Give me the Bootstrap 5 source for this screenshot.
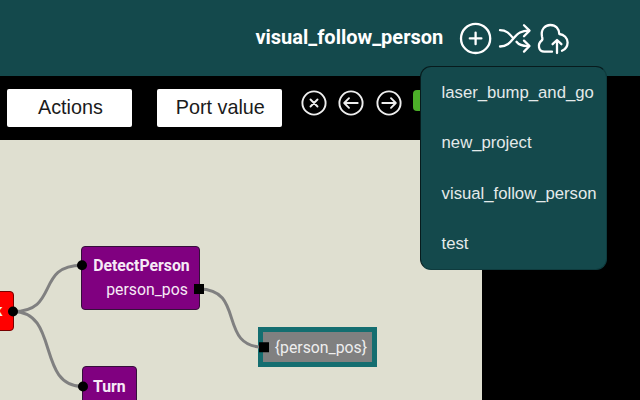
<!DOCTYPE html>
<html lang="en">
<head>
<meta charset="utf-8">
<meta name="viewport" content="width=device-width, initial-scale=1">
<title>visual_follow_person</title>
<link href="https://cdn.jsdelivr.net/npm/bootstrap@5.3.0/dist/css/bootstrap.min.css" rel="stylesheet">
<style>
body{width:640px;height:400px;background:#000;font-family:Roboto,"Liberation Sans",sans-serif}
.topbar{height:76px;background:#14494c;padding-left:255.4px;padding-top:20px}
.project{font-size:20px;line-height:34px;width:203.6px}
.tools{height:64px;padding:13px 0 0 7.4px}
.tool-btn{width:125px;height:37.5px;border-radius:2px;background:#fff;color:#1b1b1b;font:19.8px/35px "Liberation Sans",sans-serif;padding:0 0 1px 1px;border:0}
.tool-btn:hover{background:#eee}
.tool-gap{margin-left:24.9px}
.round-icons{margin-left:18.4px;gap:11.5px}
.run{width:40px;height:21px;border-radius:4px;background:#4caf28;margin-top:1px}
.board{width:482.3px;height:260px;background:#dfdfd0}
.bt-node{background:#800080;border:1px solid #35103a;border-radius:4px;color:#f6eaf6;font-size:15.8px;line-height:24px}
.detect{left:81px;top:105.5px;width:119px;height:64px;padding:7.8px 11.2px}
.turn{left:82px;top:225.8px;width:54.5px;height:64px;padding:8.2px 10px}
.fork{left:-60px;top:151px;width:74px;height:40px;background:#f00;border-color:#700;padding:7px 10.5px}
.port-box{left:257.7px;top:187.2px;width:119.5px;height:39.4px;background:#808080;border:5px solid #146e70;color:#eee;font-size:15.8px;line-height:31.5px;padding-left:12px}
.projects{left:420px;top:65.5px;width:187px;height:204px;background:#14494c;border:1.5px solid #071b1d;border-right-color:#0f3b3e;border-bottom-color:#0f3b3e;border-radius:11px;padding:0 0 0 20.6px}
.projects a{height:50.5px;font:16.7px/51px "Liberation Sans",sans-serif;color:#e4eaea;padding:0}
</style>
</head>
<body class="overflow-hidden position-relative">
<header class="topbar d-flex align-items-start text-white">
  <div class="project fw-bold text-nowrap">visual_follow_person</div>
  <svg width="112" height="36" viewBox="459 20 112 36" fill="none" stroke="#fff" stroke-width="2.3" stroke-linecap="round" stroke-linejoin="round">
    <circle cx="475.6" cy="38.4" r="14.6"/>
    <path d="M475.6 32.6v11.6M469.8 38.4h11.6"/>
    <path d="M500 30.2C507 30.2 510 34.5 513 38M516.5 41.8Q520 46.4 529 46M500 46.5C511 46.5 513 36 520 32.5Q524 30.5 529 30.6"/>
    <path d="M524 25.2l5.5 5.4-5.5 5.6M524 40.6l5.5 5.4-5.5 5.6"/>
    <path d="M552 51.7H544.3C538.5 51.7 537 44.4 541.7 40.5Q543 39.4 542 36.5C540.6 29.5 545 25 550.3 25C556 25 559 29 559.3 34C564 34.3 567.6 38 567.6 42.6Q567.4 48.4 562 50.8"/>
    <path d="M557 53V40.2M552.6 44.2l4.4-4.2 4.4 4.2"/>
  </svg>
</header>
<div class="tools d-flex align-items-start">
  <button class="btn tool-btn" type="button">Actions</button>
  <button class="btn tool-btn tool-gap" type="button">Port value</button>
  <div class="round-icons d-flex">
    <svg width="26" height="28" viewBox="-13 -14 26 28" fill="none" stroke="#eee" stroke-width="1.9" stroke-linecap="round" stroke-linejoin="round"><circle r="11.6"/><path d="M-3.5-3.5l7 7M3.5-3.5l-7 7"/></svg>
    <svg width="26" height="28" viewBox="-13 -14 26 28" fill="none" stroke="#eee" stroke-width="1.9" stroke-linecap="round" stroke-linejoin="round"><circle r="11.6"/><path d="M6.7 0H-6.7M-2-4.8L-6.8 0-2 4.8"/></svg>
    <svg width="26" height="28" viewBox="-13 -14 26 28" fill="none" stroke="#eee" stroke-width="1.9" stroke-linecap="round" stroke-linejoin="round"><circle r="11.6"/><path d="M-6.7 0H6.7M2-4.8L6.8 0 2 4.8"/></svg>
    <div class="run"></div>
  </div>
</div>
<main class="board position-relative overflow-hidden">
  <div class="bt-node fork position-absolute text-end fw-bold">Fork</div>
  <div class="bt-node detect position-absolute text-end"><div class="fw-bold">DetectPerson</div><div>person_pos</div></div>
  <div class="bt-node turn position-absolute fw-bold">Turn</div>
  <div class="port-box position-absolute text-nowrap">{person_pos}</div>
  <svg class="position-absolute top-0 start-0" width="482" height="260" viewBox="0 140 482 260">
    <g fill="none" stroke="#808080" stroke-width="3">
      <path d="M13 311.5C60 311.5 35 265.2 82 265.2M13 311.5C60 311.5 36 386.5 83 386.5M199 289C246 289 217 347.2 264 347.2"/>
    </g>
    <circle cx="13" cy="311.5" r="5"/><circle cx="82" cy="265.2" r="5"/><circle cx="83" cy="386.5" r="5"/>
    <path d="M194 284h10v10h-10zM259 342.3h10v10h-10z"/>
  </svg>
</main>
<nav class="projects position-absolute d-flex flex-column">
  <a class="nav-link" href="#">laser_bump_and_go</a>
  <a class="nav-link" href="#">new_project</a>
  <a class="nav-link" href="#">visual_follow_person</a>
  <a class="nav-link" href="#">test</a>
</nav>
<script src="https://cdn.jsdelivr.net/npm/bootstrap@5.3.0/dist/js/bootstrap.bundle.min.js"></script>
</body>
</html>
